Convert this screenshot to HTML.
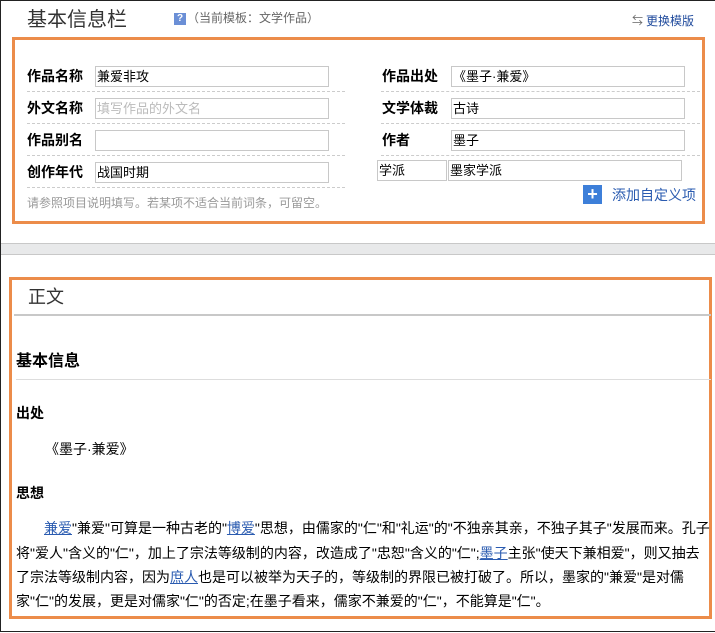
<!DOCTYPE html>
<html><head><meta charset="utf-8"><style>
*{margin:0;padding:0;box-sizing:border-box}
body{width:715px;height:633px;position:relative;background:#fff;font-family:"Liberation Sans","Noto Sans CJK SC","WenQuanYi Zen Hei",sans-serif;overflow:hidden;color:#000}
.a{position:absolute;white-space:nowrap}
.frame{position:absolute;left:0;top:0;width:715px;height:632px;border:1px solid #222;border-right:none}
.ob{position:absolute;border:3px solid #ec8c4a}
.lbl{font-size:14px;font-weight:bold;line-height:20px}
.in{position:absolute;height:21px;border:1px solid #c8c8c8;font-size:13px;line-height:19px;padding-left:1px;background:#fff}
.dl{position:absolute;height:0;border-top:1px dashed #ccc}
.p{font-size:14px;line-height:20px}
a{color:#2a5bb0;text-decoration:underline}
</style></head><body>
<div class="frame"></div>
<div class="a" style="left:27px;top:7px;font-size:20px;color:#333;line-height:26px">基本信息栏</div>
<div class="a" style="left:174px;top:13px;width:12px;height:12px;background:#6b8fd6;color:#fff;font-size:10px;font-weight:bold;text-align:center;line-height:12px">?</div>
<div class="a" style="left:187px;top:10px;font-size:12px;color:#666;line-height:16px">（当前模板：文学作品）</div>
<div class="a" style="left:632px;top:13px;font-size:11px;color:#666;line-height:16px">⇆</div>
<div class="a" style="left:646px;top:13px;font-size:12px;color:#1f4a9c;line-height:16px">更换模版</div>

<div class="ob" style="left:12px;top:37px;width:693px;height:187px"></div>
<div class="a lbl" style="left:27px;top:66px">作品名称</div>
<div class="a lbl" style="left:27px;top:98px">外文名称</div>
<div class="a lbl" style="left:27px;top:130px">作品别名</div>
<div class="a lbl" style="left:27px;top:162px">创作年代</div>
<div class="in" style="left:95px;top:66px;width:234px">兼爱非攻</div>
<div class="in" style="left:95px;top:98px;width:234px;color:#bbb">填写作品的外文名</div>
<div class="in" style="left:95px;top:130px;width:234px"></div>
<div class="in" style="left:95px;top:162px;width:234px">战国时期</div>
<div class="dl" style="left:27px;top:91px;width:318px"></div>
<div class="dl" style="left:27px;top:123px;width:318px"></div>
<div class="dl" style="left:27px;top:155px;width:318px"></div>
<div class="dl" style="left:27px;top:187px;width:318px"></div>
<div class="a lbl" style="left:382px;top:66px">作品出处</div>
<div class="a lbl" style="left:382px;top:98px">文学体裁</div>
<div class="a lbl" style="left:382px;top:130px">作者</div>
<div class="in" style="left:451px;top:66px;width:234px">《墨子·兼爱》</div>
<div class="in" style="left:451px;top:98px;width:234px">古诗</div>
<div class="in" style="left:451px;top:130px;width:234px">墨子</div>
<div class="dl" style="left:381px;top:91px;width:319px"></div>
<div class="dl" style="left:381px;top:123px;width:319px"></div>
<div class="dl" style="left:381px;top:155px;width:319px"></div>
<div class="in" style="left:377px;top:160px;width:70px">学派</div>
<div class="in" style="left:448px;top:160px;width:234px">墨家学派</div>
<div class="a" style="left:27px;top:195px;font-size:12px;color:#999;line-height:16px">请参照项目说明填写。若某项不适合当前词条，可留空。</div>
<div class="a" style="left:583px;top:185px;width:19px;height:19px;background:#3d7fd9;color:#fff;font-size:18px;font-weight:bold;text-align:center;line-height:19px">+</div>
<div class="a" style="left:612px;top:186px;font-size:14px;color:#2a5bb0;line-height:18px">添加自定义项</div>

<div class="a" style="left:1px;top:243px;width:714px;height:12px;background:#e8e9ea;border-top:1px solid #c8c8c8;border-bottom:1px solid #c8c8c8"></div>

<div class="ob" style="left:9px;top:277px;width:703px;height:342px"></div>
<div class="a" style="left:28px;top:285px;font-size:18px;color:#333;line-height:24px">正文</div>
<div class="a" style="left:14px;top:314px;width:697px;height:2px;background:#c8c8c8"></div>
<div class="a" style="left:16px;top:351px;font-size:16px;font-weight:bold;line-height:22px">基本信息</div>
<div class="a" style="left:16px;top:379px;width:695px;height:1px;background:#ddd"></div>
<div class="a" style="left:16px;top:403px;font-size:14px;font-weight:bold;line-height:20px">出处</div>
<div class="a p" style="left:45px;top:439px">《墨子·兼爱》</div>
<div class="a" style="left:16px;top:483px;font-size:14px;font-weight:bold;line-height:20px">思想</div>
<div class="a p" style="left:44px;top:518px"><a>兼爱</a>"兼爱"可算是一种古老的"<a>博爱</a>"思想，由儒家的"仁"和"礼运"的"不独亲其亲，不独子其子"发展而来。孔子</div>
<div class="a p" style="left:16px;top:543px">将"爱人"含义的"仁"，加上了宗法等级制的内容，改造成了"忠恕"含义的"仁";<a>墨子</a>主张"使天下兼相爱"，则又抽去</div>
<div class="a p" style="left:16px;top:567px">了宗法等级制内容，因为<a>庶人</a>也是可以被举为天子的，等级制的界限已被打破了。所以，墨家的"兼爱"是对儒</div>
<div class="a p" style="left:16px;top:591px">家"仁"的发展，更是对儒家"仁"的否定;在墨子看来，儒家不兼爱的"仁"，不能算是"仁"。</div>
</body></html>
